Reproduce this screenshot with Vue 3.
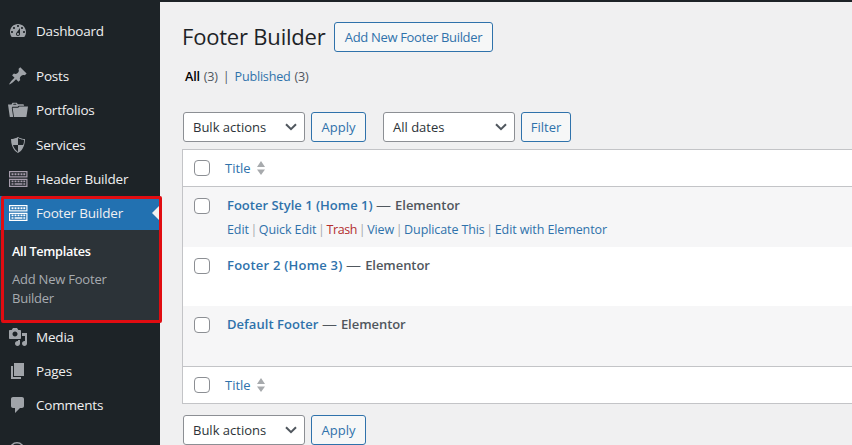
<script setup>
const dashboardIcon = 'M3.76 16h12.48c1.1-1.37 1.76-3.11 1.76-5 0-4.42-3.58-8-8-8s-8 3.58-8 8c0 1.89.66 3.63 1.76 5zM10 4c.55 0 1 .45 1 1s-.45 1-1 1-1-.45-1-1 .45-1 1-1zM6 6c.55 0 1 .45 1 1s-.45 1-1 1-1-.45-1-1 .45-1 1-1zm8 0c.55 0 1 .45 1 1s-.45 1-1 1-1-.45-1-1 .45-1 1-1zm-5.37 5.55L12 7v6c0 1.1-.9 2-2 2s-2-.9-2-2c0-.57.24-1.08.63-1.45zM4 10c.55 0 1 .45 1 1s-.45 1-1 1-1-.45-1-1 .45-1 1-1zm12 0c.55 0 1 .45 1 1s-.45 1-1 1-1-.45-1-1 .45-1 1-1zm-5 3c0-.55-.45-1-1-1s-1 .45-1 1 .45 1 1 1 1-.45 1-1z'
const pinIcon = 'M10.44 3.02l1.82-1.82 6.36 6.35-1.83 1.82c-1.05-.68-2.48-.57-3.41.36l-.75.75c-.92.93-1.04 2.35-.35 3.41l-1.83 1.82-2.41-2.41-2.8 2.79c-.42.42-3.38 2.71-3.8 2.29s1.86-3.39 2.28-3.81l2.79-2.79L4.1 9.36l1.83-1.82c1.05.69 2.48.57 3.4-.36l.75-.75c.93-.92 1.05-2.35.36-3.41z'
const folderIcon = 'M0 4.500h3.500L4.500 2.700h4.300l1 1.500h5.700l.7 1.500h-5.400l-1.200 1H4.300l-.5 1.300L5.200 17H1.800zM5.600 3.700l-.5 1h3.400L8 3.700zM4.600 7.700h5.600l1.200-1.200H20L18.400 17H6z'
const shieldIcon = 'M10 2s3 2 7 2c0 11-7 14-7 14S3 15 3 4c4 0 7-2 7-2zm0 8h5s1-1 1-5c0 0-5-1-6-2v7H5c1 4 5 7 5 7v-7z'
const mediaIcon = 'M13 11V4c0-.55-.45-1-1-1h-1.67L9 1H5L3.67 3H2c-.55 0-1 .45-1 1v7c0 .55.45 1 1 1h10c.55 0 1-.45 1-1zM7 4.5c1.38 0 2.5 1.12 2.5 2.5S8.38 9.5 7 9.5 4.5 8.38 4.5 7 5.62 4.5 7 4.5zM14 6h5v10.5c0 1.38-1.12 2.5-2.5 2.5S14 17.88 14 16.5s1.12-2.5 2.5-2.5c.17 0 .34.02.5.05V9h-3V6zm-4 8.05V13h2v3.5c0 1.38-1.12 2.5-2.5 2.5S7 17.88 7 16.5 8.12 14 9.5 14c.17 0 .34.02.5.05z'
const pageIcon = 'M6 15V2h10v13H6zm-1 1h8v2H3V5h2v11z'
const commentIcon = 'M5 2h9c1.1 0 2 .9 2 2v7c0 1.1-.9 2-2 2h-2l-5 5v-5H5c-1.1 0-2-.9-2-2V4c0-1.1.9-2 2-2z'
const builderIcon = 'M1 2h18.500v6.500H1zM2.200 3.200v4.100h16.100V3.200zM1 9.700h18.500V18H1zM2.200 10.900v5.900h16.100v-5.900zM3.500 4.300h2v1.900h-2zM6.500 4.300h2v1.900h-2zM9.500 4.300h2v1.900h-2zM12.500 4.300h2v1.900h-2zM15.300 4.300h2v1.900h-2zM3.500 11.600h2v1.600h-2zM6.500 11.600h2v1.600h-2zM9.500 11.600h2v1.600h-2zM12.500 11.600h2v1.600h-2zM15.300 11.600h2v1.600h-2zM3.500 14.300h2v1.500h-2zM6.500 14.300h8v1.500h-8zM15.300 14.300h2v1.500h-2z'

const menuTop = [
  { key: 'dashboard', label: 'Dashboard', icon: dashboardIcon },
  { key: 'posts', label: 'Posts', icon: pinIcon },
  { key: 'portfolios', label: 'Portfolios', icon: folderIcon },
  { key: 'services', label: 'Services', icon: shieldIcon },
  { key: 'header', label: 'Header Builder', icon: builderIcon },
]
const menuBottom = [
  { key: 'media', label: 'Media', icon: mediaIcon },
  { key: 'pages', label: 'Pages', icon: pageIcon },
  { key: 'comments', label: 'Comments', icon: commentIcon },
]
const rows = [
  {
    title: 'Footer Style 1 (Home 1)',
    actions: ['Edit', 'Quick Edit', 'Trash', 'View', 'Duplicate This', 'Edit with Elementor'],
  },
  { title: 'Footer 2 (Home 3)', actions: [] },
  { title: 'Default Footer', actions: [] },
]
</script>

<template>
  <div class="screen">
    <div class="adminbar"></div>
    <div class="body">
      <nav class="sidebar">
        <a v-for="m in menuTop" :key="m.key" class="item upper" :class="m.key">
          <svg class="icon" viewBox="0 0 20 20"><path fill-rule="evenodd" :d="m.icon" /></svg>
          <span>{{ m.label }}</span>
        </a>
        <div class="group">
          <a class="item current">
            <svg class="icon" viewBox="0 0 20 20"><path fill-rule="evenodd" :d="builderIcon" /></svg>
            <span>Footer Builder</span>
            <i class="arrow"></i>
          </a>
          <div class="submenu">
            <a class="sub active">All Templates</a>
            <a class="sub">Add New Footer Builder</a>
          </div>
          <div class="highlight"></div>
        </div>
        <a v-for="m in menuBottom" :key="m.key" class="item" :class="m.key">
          <svg class="icon" viewBox="0 0 20 20"><path fill-rule="evenodd" :d="m.icon" /></svg>
          <span>{{ m.label }}</span>
        </a>
        <a class="item more">
          <svg class="icon" viewBox="0 0 20 20"><circle cx="9" cy="10" r="7.2" /></svg>
        </a>
      </nav>

      <main class="content">
        <header class="heading">
          <h1>Footer Builder</h1>
          <button class="btn add">Add New Footer Builder</button>
        </header>
        <div class="filters">
          <b>All</b><span class="count">(3)</span><span class="bar">|</span><a>Published</a><span class="count">(3)</span>
        </div>
        <div class="tablenav">
          <div class="select bulk">
            <span>Bulk actions</span>
            <svg viewBox="0 0 12 8"><path d="M1 1.2l5 5 5-5" /></svg>
          </div>
          <button class="btn apply">Apply</button>
          <div class="select dates">
            <span>All dates</span>
            <svg viewBox="0 0 12 8"><path d="M1 1.2l5 5 5-5" /></svg>
          </div>
          <button class="btn filter">Filter</button>
        </div>
        <section class="table">
          <div class="thead">
            <i class="check"></i><a>Title</a>
            <svg class="sort" viewBox="0 0 8 14"><path d="M0 6l4-6 4 6zM0 8.500h8l-4 5.500z" /></svg>
          </div>
          <div v-for="(r, i) in rows" :key="r.title" class="row" :class="'row' + i">
            <i class="check"></i>
            <div class="cell">
              <div class="name"><a>{{ r.title }}</a><span class="dash">—</span><span class="state">Elementor</span></div>
              <div v-if="r.actions.length" class="actions">
                <template v-for="(a, j) in r.actions" :key="a">
                  <em v-if="j">|</em><a :class="{ trash: a === 'Trash' }">{{ a }}</a>
                </template>
              </div>
            </div>
          </div>
          <div class="thead tfoot">
            <i class="check"></i><a>Title</a>
            <svg class="sort" viewBox="0 0 8 14"><path d="M0 6l4-6 4 6zM0 8.500h8l-4 5.500z" /></svg>
          </div>
        </section>
        <div class="tablenav bottom">
          <div class="select bulk">
            <span>Bulk actions</span>
            <svg viewBox="0 0 12 8"><path d="M1 1.2l5 5 5-5" /></svg>
          </div>
          <button class="btn apply">Apply</button>
        </div>
      </main>
    </div>
  </div>
</template>

<style>
body {
  overflow: hidden;
}
</style>

<style scoped>
* {
  box-sizing: border-box;
}
.screen {
  width: 852px;
  height: 445px;
  overflow: hidden;
  background: #f0f0f1;
  font-family: "Open Sans", "Noto Sans", sans-serif;
  font-size: 13px;
  color: #50575e;
  white-space: nowrap;
}
.adminbar {
  height: 2px;
  background: #1d2327;
}
.body {
  display: flex;
  height: 443px;
}
.sidebar {
  flex: none;
  width: 160px;
  height: 443px;
  padding-top: 12px;
  background: #1d2327;
}
.item {
  display: flex;
  align-items: center;
  gap: 8px;
  height: 34px;
  padding-left: 8px;
  font-size: 13.5px;
  letter-spacing: -0.2px;
  color: #f0f0f1;
}
.item.upper {
  height: 34.2px;
}
.item.dashboard {
  margin-bottom: 11px;
}
.icon {
  flex: none;
  width: 20px;
  height: 20px;
  fill: #a0a4a9;
}
.item.header .icon {
  fill: #a79dad;
}
.group {
  position: relative;
}
.current {
  position: relative;
  background: #2271b1;
  color: #fff;
}
.current .icon {
  fill: #fff;
}
.arrow {
  position: absolute;
  right: 0;
  top: 9px;
  border: 8px solid transparent;
  border-left: 0;
  border-right-color: #f0f0f1;
}
.submenu {
  height: 90px;
  padding: 12px 12px 0;
  background: #2c3338;
}
.sub {
  display: block;
  width: 110px;
  white-space: normal;
  line-height: 19px;
  font-size: 13px;
  letter-spacing: -0.22px;
}
.sub.active {
  margin-bottom: 9px;
  font-weight: 600;
  font-size: 12.7px;
  letter-spacing: -0.32px;
}
.highlight {
  position: absolute;
  left: 1px;
  top: 0;
  width: 161px;
  height: 127px;
  border: 3px solid #e10c11;
  border-radius: 2px;
}
.more {
  margin-top: 11px;
}
.more .icon {
  fill: none;
  stroke: #a0a4a9;
  stroke-width: 1.5;
}
.content {
  flex: 1;
  min-width: 0;
  padding: 20px 0 0 22px;
}
.heading {
  display: flex;
  align-items: center;
  gap: 9px;
  height: 30px;
}
h1 {
  width: 143px;
  margin: -2px 0 0;
  font-size: 22px;
  font-weight: 400;
  line-height: 30px;
  letter-spacing: -0.2px;
  color: #1d2327;
}
.btn {
  height: 30px;
  padding: 0;
  border: 1px solid #2f72ab;
  border-radius: 3px;
  background: #f6f7f7;
  font: inherit;
  color: #2f72ab;
}
.add {
  width: 159px;
  letter-spacing: -0.32px;
}
.filters {
  display: flex;
  height: 18px;
  margin: 16px 0 0 3px;
  line-height: 18px;
  font-size: 12.6px;
  letter-spacing: -0.2px;
}
.filters b {
  font-weight: 600;
  color: #000;
}
.count {
  margin-left: 4px;
}
.bar {
  margin: 0 5px 0 5px;
}
a {
  color: #2f72ab;
}
.sidebar a {
  color: #f0f0f1;
}
.sidebar .sub {
  color: #a7abb0;
}
.sidebar .active {
  color: #fff;
}
.tablenav {
  display: flex;
  height: 30px;
  margin: 26px 0 0 1px;
}
.select {
  display: flex;
  align-items: center;
  justify-content: space-between;
  height: 30px;
  padding: 0 7px 0 9px;
  border: 1px solid #8c8f94;
  border-radius: 3px;
  background: #fff;
  color: #2c3338;
}
.select svg {
  width: 12px;
  height: 8px;
  fill: none;
  stroke: #50575e;
  stroke-width: 2;
}
.bulk {
  width: 122px;
}
.apply {
  width: 55px;
  margin-left: 6px;
}
.dates {
  width: 132px;
  margin-left: 17px;
}
.filter {
  width: 50px;
  margin-left: 6px;
}
.table {
  width: 672px;
  margin-top: 7px;
  border: 1px solid #c3c4c7;
  background: #fff;
}
.thead {
  display: flex;
  align-items: center;
  height: 37px;
  padding-left: 11px;
  border-bottom: 1px solid #c3c4c7;
}
.tfoot {
  border-top: 1px solid #c3c4c7;
  border-bottom: 0;
}
.check {
  flex: none;
  width: 16px;
  height: 16px;
  border: 1px solid #8c8f94;
  border-radius: 4px;
  background: #fff;
}
.thead a {
  margin-left: 15px;
}
.sort {
  width: 8px;
  height: 14px;
  margin-left: 6px;
  fill: #a7aaad;
}
.row {
  display: flex;
  height: 59px;
  padding: 11px 0 0 11px;
}
.row0 {
  height: 60px;
}
.row0,
.row2 {
  background: #f6f6f7;
}
.row2 {
  height: 60px;
}
.cell {
  margin-left: 17px;
}
.name {
  display: flex;
  margin-top: -3px;
  font-size: 13px;
  font-weight: 600;
  line-height: 20px;
}
.row1 .name a {
  letter-spacing: 0.22px;
}
.row2 .name a {
  letter-spacing: 0.05px;
}
.dash {
  width: 14px;
  margin: 0 5px 0 3.5px;
  font-weight: 400;
  transform: scaleX(1.15);
  transform-origin: left;
}
.state {
  letter-spacing: -0.05px;
}
.actions {
  display: flex;
  margin-top: 5px;
  line-height: 20px;
  font-size: 12.5px;
  letter-spacing: -0.1px;
}
.actions em {
  width: 10px;
  text-align: center;
  font-style: normal;
  color: #a7aaad;
}
.actions .trash {
  letter-spacing: -0.35px;
  color: #b32d2e;
}
.bottom {
  margin-top: 11px;
}
</style>
